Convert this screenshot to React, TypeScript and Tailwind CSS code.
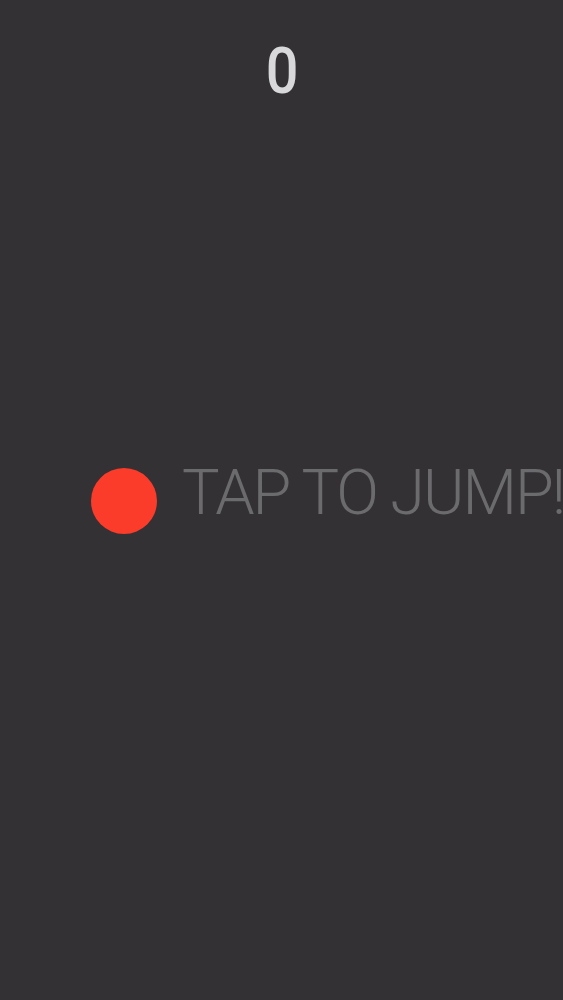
import React from "react";

export default function App() {
  return (
    <div className="h-[1000px] w-full overflow-hidden bg-[#333134] flex flex-col" style={{ fontFamily: "Roboto, 'Liberation Sans', sans-serif" }}>
      <div className="pt-[36px] flex justify-center">
        <span className="text-[64px] leading-[72px] font-medium text-[#d8d7d9] pl-[1px] scale-x-90">0</span>
      </div>
      <div className="mt-[360px] flex items-center pl-[91px] whitespace-nowrap">
        <div className="w-[66px] h-[66px] rounded-full bg-[#fb3c2a] shrink-0" />
        <span className="ml-[25px] text-[63px] leading-[66px] font-light text-[#6b6a6d] tracking-[-2px] mt-[-16px]">TAP TO JUMP!</span>
      </div>
    </div>
  );
}
